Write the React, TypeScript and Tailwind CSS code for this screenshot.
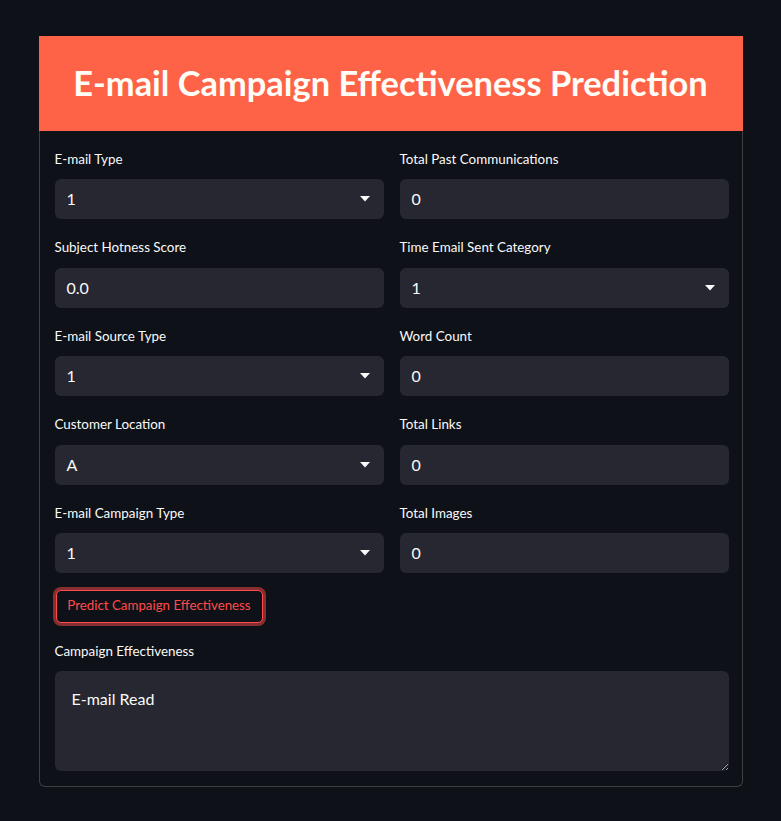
import React from "react";

const Caret = () => (
  <svg width="10" height="6" viewBox="0 0 10 6" className="shrink-0">
    <path d="M0 0 L10 0 L5 5.5 Z" fill="#fafafa" />
  </svg>
);

function Field({ label, value, select }: { label: string; value: string; select?: boolean }) {
  return (
    <div className="flex flex-col">
      <div className="h-[24px] flex items-center text-[13.4px] text-[#fafafa] mb-[8px]">{label}</div>
      <div className="h-[40px] rounded-[6px] bg-[#262730] flex items-center justify-between pl-[12px] pr-[14px] text-[16px] text-[#fafafa]">
        <span>{value}</span>
        {select && <Caret />}
      </div>
    </div>
  );
}

export default function App() {
  const rows: [string, string, boolean, string, string, boolean][] = [
    ["E-mail Type", "1", true, "Total Past Communications", "0", false],
    ["Subject Hotness Score", "0.0", false, "Time Email Sent Category", "1", true],
    ["E-mail Source Type", "1", true, "Word Count", "0", false],
    ["Customer Location", "A", true, "Total Links", "0", false],
    ["E-mail Campaign Type", "1", true, "Total Images", "0", false],
  ];
  return (
    <div
      className="min-h-[821px] w-full bg-[#0e1117] pt-[36px] pb-[35px]"
      style={{ fontFamily: "Lato, 'Noto Sans', sans-serif" }}
    >
      <div className="w-[704px] mx-auto">
        <div className="h-[95px] bg-[#ff6347] flex items-center justify-center">
          <h1 className="text-[#fffdf8] font-bold text-[34.4px] leading-none">
            E-mail Campaign Effectiveness Prediction
          </h1>
        </div>
        <div className="border border-t-0 border-[#3d4045] rounded-b-[6px] pl-[15px] pr-[13px] pt-[16px] pb-[15px] flex flex-col gap-[16.5px]">
          {rows.map((r, i) => (
            <div key={i} className="grid grid-cols-2 gap-[16px]">
              <Field label={r[0]} value={r[1]} select={r[2]} />
              <Field label={r[3]} value={r[4]} select={r[5]} />
            </div>
          ))}
          <div>
            <button className="h-[33px] w-[207px] ml-[1px] rounded-[5px] border border-[#ff4b4b] text-[#ff4b4b] text-[13.3px] bg-[#0e1117] ring-[3px] ring-[#ff4b4b]/50">
              Predict Campaign Effectiveness
            </button>
          </div>
          <div className="flex flex-col">
            <div className="h-[24px] flex items-center text-[13.4px] text-[#fafafa] mb-[7.5px]">Campaign Effectiveness</div>
            <textarea
              readOnly
              defaultValue="E-mail Read"
              className="h-[100px] w-full rounded-[6px] bg-[#262730] text-[#fafafa] text-[16px] leading-[24px] px-[17px] py-[16px] outline-none resize-y"
              style={{ colorScheme: "dark" }}
            />
          </div>
        </div>
      </div>
    </div>
  );
}
